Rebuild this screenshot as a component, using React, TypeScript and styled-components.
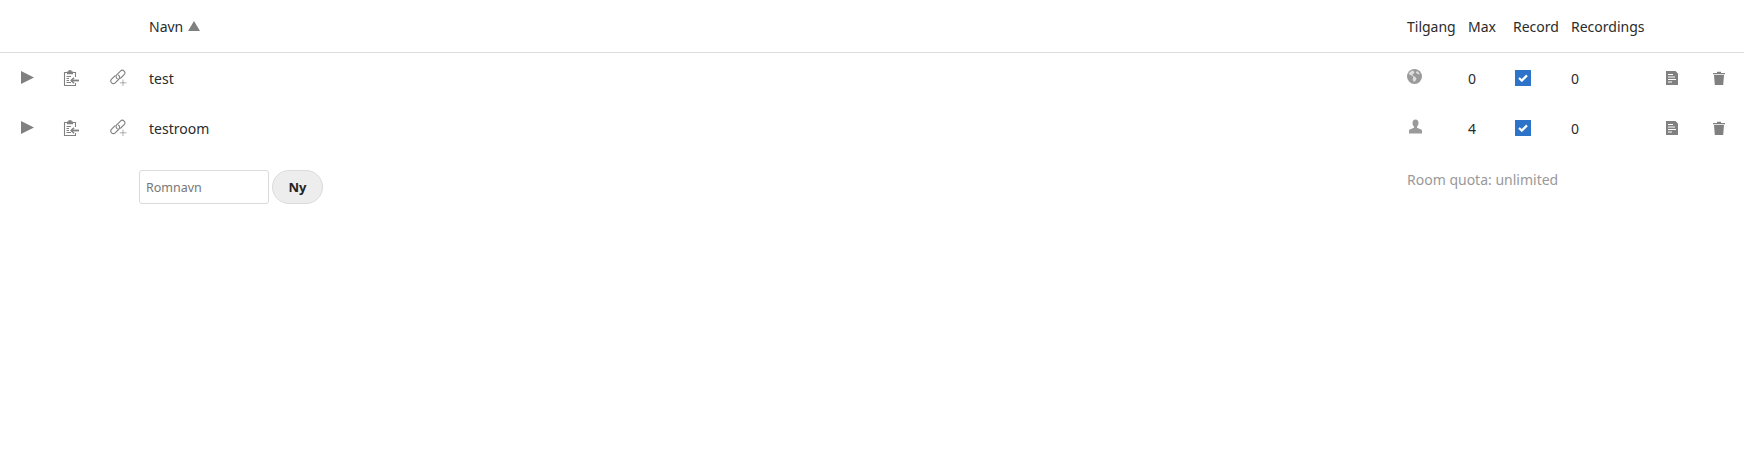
import * as React from 'react';
import styled, { createGlobalStyle } from 'styled-components';

const columns = '54px 34px 61px 1fr 61px 45px 58px 79px 44px 50px';

const rooms = [
  { name: 'test', access: 'public', max: 0, recordings: 0 },
  { name: 'testroom', access: 'user', max: 4, recordings: 0 },
];

const GlobalStyle = createGlobalStyle`
  html, body {
    margin: 0;
    background: #fff;
  }
  body {
    font-family: "Noto Sans", "Open Sans", sans-serif;
    font-size: 14px;
    color: #2b2b2b;
  }
`;

const Page = styled.div`
  width: 1744px;
  height: 472px;
  overflow: hidden;
`;

const HeaderRow = styled.div`
  display: grid;
  grid-template-columns: ${columns};
  align-items: center;
  height: 52px;
  border-bottom: 1px solid #ddd;
`;

const Row = styled.div`
  display: grid;
  grid-template-columns: ${columns};
  align-items: center;
  height: 50px;
`;

const HeaderName = styled.div`
  grid-column: 4;
  display: flex;
  align-items: center;
  gap: 5px;
`;

const IconCell = styled.div<{ $up?: number }>`
  display: flex;
  justify-content: center;
  align-items: center;
  margin-top: ${p => -(p.$up ?? 0)}px;
  color: #808080;
`;

const AccessCell = styled.div<{ $inset?: number }>`
  display: flex;
  align-items: center;
  margin-top: -4px;
  padding-left: ${p => p.$inset ?? 0}px;
  color: #9a9a9a;
`;

const RecordCell = styled.div`
  padding-left: 2px;
  display: flex;
`;

const CheckBox = styled.span`
  width: 16px;
  height: 16px;
  background: #2d74c9;
  display: flex;
  align-items: center;
  justify-content: center;
`;

const FooterRow = styled.div`
  display: grid;
  grid-template-columns: ${columns};
  align-items: start;
  padding-top: 17px;
`;

const RoomForm = styled.form`
  grid-column: 4 / span 1;
  margin-left: -10px;
  display: flex;
  gap: 3px;
`;

const NameInput = styled.input`
  box-sizing: border-box;
  width: 130px;
  height: 34px;
  padding: 0 6px;
  border: 1px solid #dbdbdb;
  border-radius: 3px;
  background: #fff;
  font: inherit;
  font-size: 12.5px;
  outline: none;
  &::placeholder {
    color: #777;
    opacity: 1;
  }
`;

const NewButton = styled.button`
  box-sizing: border-box;
  width: 51px;
  height: 34px;
  padding: 0;
  border: 1px solid #dbdbdb;
  border-radius: 17px;
  background: #ededed;
  color: #222;
  font: inherit;
  font-size: 13px;
  font-weight: 700;
`;

const Quota = styled.div`
  grid-column: 5 / span 4;
  color: #999;
  line-height: 20px;
`;

const PlayIcon = () => (
  <svg width="13" height="13" viewBox="0 0 13 13">
    <path d="M0 0 L13 6.5 L0 13 Z" fill="currentColor" />
  </svg>
);

const SortIcon = () => (
  <svg width="12" height="10" viewBox="0 0 12 10">
    <path d="M6 0 L12 10 L0 10 Z" fill="#808080" />
  </svg>
);

const ClipboardIcon = () => (
  <svg width="16" height="16" viewBox="0 0 16 16" fill="none" stroke="currentColor" strokeWidth="1.1">
    <path d="M4.5 2.5 H1.5 V15.5 H12.5 V13" />
    <path d="M9.5 2.5 H12.5 V7" />
    <path d="M4.5 3.8 V2 H6 V0.8 H8 V2 H9.5 V3.8 Z" fill="currentColor" />
    <path d="M3.5 6.5 H8 M3.5 8.5 H6 M3.5 10.5 H6 M3.5 12.5 H8" />
    <path d="M8 10.5 H16" strokeWidth="1.8" />
    <path d="M11 7.7 L8.2 10.5 L11 13.3" strokeWidth="1.5" />
  </svg>
);

const LinkIcon = () => (
  <svg width="17" height="17" viewBox="0 0 17 17" fill="none" stroke="currentColor" strokeWidth="1.1">
    <path d="M5.4 6.4 L1.6 10.2 A2.5 2.5 0 0 0 5.2 13.8 L9 10 A2.5 2.5 0 0 0 8.1 6" />
    <path d="M7.6 9.9 A2.5 2.5 0 0 1 6.7 5.9 L10.5 2.1 A2.5 2.5 0 0 1 14.1 5.7 L10.3 9.5" />
    <path d="M13 10.5 V17 M9.8 13.8 H16.5" strokeWidth="0.9" opacity="0.7" />
  </svg>
);

const GlobeIcon = () => (
  <svg width="15" height="15" viewBox="0 0 15 15">
    <circle cx="7.5" cy="7.5" r="7.5" fill="currentColor" />
    <path
      d="M6 1.4 C4 1.8 2.5 3 1.8 4.8 L3.4 6.2 L5.5 6.8 L6.3 8.6 L5.6 10.2 L6.6 12.8 L8 12.4 L9.6 9.8 L8.4 8 L6.4 7 L5.4 5.2 L7 4.6 L7.4 3 Z M10 2 L8.8 3.6 L10.4 5 L12.8 5.4 C12.2 3.8 11.2 2.7 10 2 Z"
      fill="#dedede"
    />
  </svg>
);

const UserIcon = () => (
  <svg width="13" height="15" viewBox="0 0 13 15">
    <path
      d="M6.5 0.5 C8.4 0.5 9.5 2 9.5 4 C9.5 5.6 8.8 6.9 8 7.6 L8 8.8 L12.2 10.6 C12.8 10.9 13 11.3 13 12 V14.5 H0 V12 C0 11.3 0.2 10.9 0.8 10.6 L5 8.8 V7.6 C4.2 6.9 3.5 5.6 3.5 4 C3.5 2 4.6 0.5 6.5 0.5 Z"
      fill="currentColor"
    />
  </svg>
);

const CheckMark = () => (
  <svg width="10" height="8" viewBox="0 0 10 8" fill="none">
    <path d="M1 4 L3.8 6.6 L9 1.4" stroke="#fff" strokeWidth="2.2" />
  </svg>
);

const DocIcon = () => (
  <svg width="12" height="14" viewBox="0 0 12 14">
    <path d="M0 0 H9.5 L12 2.5 V14 H0 Z" fill="currentColor" />
    <path d="M2 3.5 H7 M2 6 H9 M2 8.5 H10 M2 11 H6" stroke="#fff" strokeWidth="1" />
  </svg>
);

const TrashIcon = () => (
  <svg width="12" height="14" viewBox="0 0 12 14">
    <path d="M0 2 H4 V0.8 H8 V2 H12 V3.2 H0 Z M1 4 H11 L10.2 14 H1.8 Z" fill="currentColor" />
  </svg>
);

const App = () => (
  <Page>
    <GlobalStyle />
    <HeaderRow>
      <HeaderName>
        Navn <SortIcon />
      </HeaderName>
      <div>Tilgang</div>
      <div>Max</div>
      <div>Record</div>
      <div>Recordings</div>
    </HeaderRow>
    {rooms.map(room => (
      <Row key={room.name}>
        <IconCell $up={1}>
          <PlayIcon />
        </IconCell>
        <IconCell>
          <ClipboardIcon />
        </IconCell>
        <IconCell $up={1}>
          <LinkIcon />
        </IconCell>
        <div>{room.name}</div>
        {room.access === 'public' ? (
          <AccessCell>
            <GlobeIcon />
          </AccessCell>
        ) : (
          <AccessCell $inset={2}>
            <UserIcon />
          </AccessCell>
        )}
        <div>{room.max}</div>
        <RecordCell>
          <CheckBox>
            <CheckMark />
          </CheckBox>
        </RecordCell>
        <div>{room.recordings}</div>
        <IconCell>
          <DocIcon />
        </IconCell>
        <IconCell>
          <TrashIcon />
        </IconCell>
      </Row>
    ))}
    <FooterRow>
      <RoomForm>
        <NameInput placeholder="Romnavn" />
        <NewButton type="button">Ny</NewButton>
      </RoomForm>
      <Quota>Room quota: unlimited</Quota>
    </FooterRow>
  </Page>
);

export default App;
